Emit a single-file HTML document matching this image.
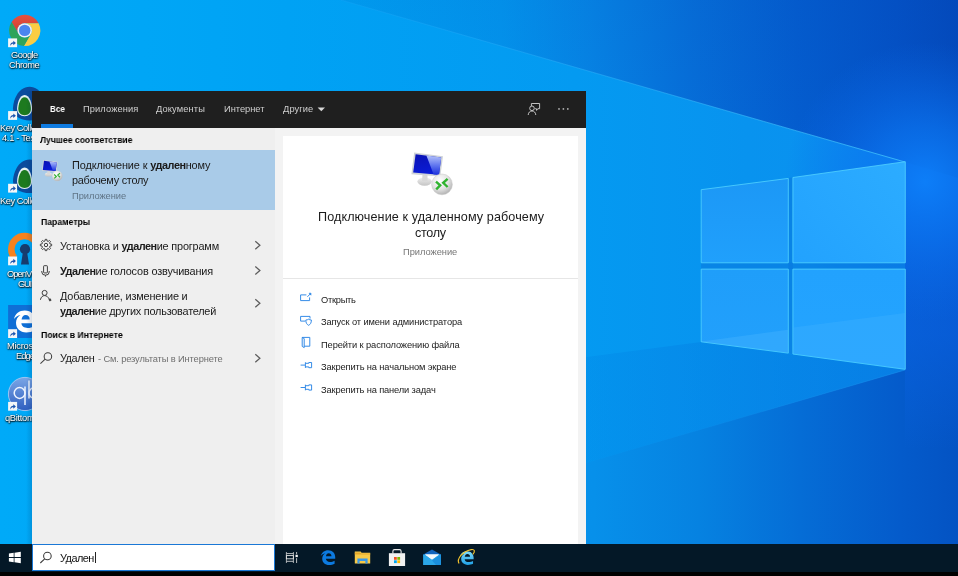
<!DOCTYPE html>
<html lang="ru">
<head>
<meta charset="utf-8">
<title>Поиск</title>
<style>
html,body{margin:0;padding:0;}
body{width:958px;height:576px;overflow:hidden;position:relative;background:#0a84e0;font-family:"Liberation Sans",sans-serif;}
.abs{position:absolute;}
.t{position:absolute;white-space:nowrap;margin:0;padding:0;will-change:transform;}
.t{--ls:0px;}
.t b{font-weight:700;letter-spacing:calc(var(--ls) - 0.33px);}
#wall{position:absolute;left:0;top:0;width:958px;height:576px;display:block;}
#desk{position:absolute;left:0;top:0;width:958px;height:576px;}
#panel{position:absolute;left:0;top:0;width:958px;height:576px;}
#hdr{position:absolute;left:32px;top:91px;width:554px;height:37px;background:#1f1f1f;}
#uline{position:absolute;left:41px;top:124px;width:32px;height:3.5px;background:#0f7be0;}
#lpane{position:absolute;left:32px;top:127.6px;width:242.5px;height:416px;background:#efefef;}
#rpane{position:absolute;left:274.5px;top:127.6px;width:311.5px;height:416px;background:#f3f3f3;}
#card{position:absolute;left:283.4px;top:136px;width:294.4px;height:408px;background:#ffffff;}
#divl{position:absolute;left:283.4px;top:277.5px;width:294.4px;height:1px;background:#e6e6e6;}
#sel{position:absolute;left:32px;top:150.3px;width:242.5px;height:59.3px;background:#a9cbe8;}
#task{position:absolute;left:0;top:543.6px;width:958px;height:28.4px;background:#041827;}
#blk{position:absolute;left:0;top:572px;width:958px;height:4px;background:#000;}
#sbox{position:absolute;left:32px;top:543.5px;width:242.5px;height:27.7px;background:#fff;box-sizing:border-box;border:1.3px solid #1a78d6;border-top-width:1.6px;}
#caret{position:absolute;left:94.6px;top:552.3px;width:0.9px;height:11.2px;background:#222;}
svg{position:absolute;overflow:visible;}
</style>
</head>
<body>
<svg id="wall" viewBox="0 0 958 576" width="958" height="576">
<!--WALL--><defs>
<linearGradient id="gfloor" x1="0" y1="0" x2="958" y2="0" gradientUnits="userSpaceOnUse">
<stop offset="0" stop-color="#00a8f6"/><stop offset="0.45" stop-color="#049af0"/><stop offset="0.62" stop-color="#0790ea"/><stop offset="0.73" stop-color="#0682e1"/><stop offset="0.835" stop-color="#056dd6"/><stop offset="0.94" stop-color="#045bcb"/><stop offset="1" stop-color="#0453c3"/>
</linearGradient>
<linearGradient id="gbeam" x1="0" y1="0" x2="958" y2="0" gradientUnits="userSpaceOnUse">
<stop offset="0" stop-color="#00aaf8"/><stop offset="0.3" stop-color="#00a2f4"/><stop offset="0.6" stop-color="#049af1"/><stop offset="0.78" stop-color="#0893ef"/><stop offset="0.945" stop-color="#0c90f0"/>
</linearGradient>
<linearGradient id="gtop" x1="341" y1="0" x2="958" y2="0" gradientUnits="userSpaceOnUse">
<stop offset="0" stop-color="#009ff2"/><stop offset="0.26" stop-color="#0394ed"/><stop offset="0.40" stop-color="#0684e5"/><stop offset="0.58" stop-color="#066dd8"/><stop offset="0.74" stop-color="#045dcf"/><stop offset="0.9" stop-color="#0452c6"/><stop offset="1" stop-color="#044bbd"/>
</linearGradient>
<linearGradient id="gtopv" x1="0" y1="0" x2="0" y2="170" gradientUnits="userSpaceOnUse">
<stop offset="0" stop-color="#002a90" stop-opacity="0.05"/><stop offset="1" stop-color="#002a90" stop-opacity="0"/>
</linearGradient>
<radialGradient id="gglow" cx="925" cy="182" r="140" gradientUnits="userSpaceOnUse">
<stop offset="0" stop-color="#0d7ef8" stop-opacity="1"/><stop offset="0.4" stop-color="#0b74f0" stop-opacity="0.7"/><stop offset="1" stop-color="#0a68e8" stop-opacity="0"/>
</radialGradient>
<linearGradient id="gline" x1="341" y1="0" x2="905" y2="0" gradientUnits="userSpaceOnUse">
<stop offset="0" stop-color="#30b0ff" stop-opacity="0.15"/><stop offset="1" stop-color="#46ccff" stop-opacity="0.75"/>
</linearGradient>
<linearGradient id="gline2" x1="586" y1="0" x2="905" y2="0" gradientUnits="userSpaceOnUse">
<stop offset="0" stop-color="#0a8ae6" stop-opacity="0"/><stop offset="1" stop-color="#1a90ee" stop-opacity="0.5"/>
</linearGradient>
<linearGradient id="gmid" x1="560" y1="0" x2="905" y2="0" gradientUnits="userSpaceOnUse">
<stop offset="0" stop-color="#0074dc" stop-opacity="0.14"/><stop offset="1" stop-color="#0066d6" stop-opacity="0.42"/>
</linearGradient>
<linearGradient id="gp1" x1="0" y1="180" x2="0" y2="263" gradientUnits="userSpaceOnUse"><stop offset="0" stop-color="#1c98f6"/><stop offset="1" stop-color="#20a0fc"/></linearGradient>
<linearGradient id="gp2" x1="793" y1="263" x2="905" y2="165" gradientUnits="userSpaceOnUse"><stop offset="0" stop-color="#22a2fe"/><stop offset="1" stop-color="#2cacff"/></linearGradient>
<linearGradient id="gp3" x1="0" y1="269" x2="0" y2="353" gradientUnits="userSpaceOnUse"><stop offset="0" stop-color="#1f9efa"/><stop offset="1" stop-color="#22a0fc"/></linearGradient>
<linearGradient id="gp4" x1="0" y1="269" x2="0" y2="369" gradientUnits="userSpaceOnUse"><stop offset="0" stop-color="#22a2fe"/><stop offset="1" stop-color="#24a4ff"/></linearGradient>
<linearGradient id="gright" x1="0" y1="162" x2="0" y2="450" gradientUnits="userSpaceOnUse"><stop offset="0" stop-color="#0a62e2" stop-opacity="0.65"/><stop offset="0.6" stop-color="#0a62e2" stop-opacity="0.6"/><stop offset="1" stop-color="#0a62e2" stop-opacity="0"/></linearGradient>
</defs>
<rect x="0" y="0" width="958" height="576" fill="url(#gfloor)"/>
<polygon points="0,0 341,0 905,162 905,370 198,576 0,576" fill="url(#gbeam)"/>
<polygon points="701,342 905,370 560,470.6 560,360.4" fill="url(#gmid)"/>
<polygon points="341,0 958,0 958,178 905,162" fill="url(#gtop)"/>
<polygon points="341,0 958,0 958,178 905,162" fill="url(#gtopv)"/>
<polygon points="905,162 958,178 958,450 905,450" fill="url(#gright)"/>
<circle cx="925" cy="182" r="140" fill="url(#gglow)"/>
<line x1="341" y1="0" x2="905" y2="162" stroke="url(#gline)" stroke-width="1"/>
<line x1="586" y1="463" x2="905" y2="370" stroke="url(#gline2)" stroke-width="1"/>
<polygon points="788.3,178 792.9,177.4 792.9,354.2 788.3,353.3" fill="#0a78de" opacity="0.55"/>
<polygon points="701.2,262.8 905.3,262.8 905.3,269.1 701.2,269.1" fill="#0a78de" opacity="0.55"/>
<g stroke="#55d6ff" stroke-width="0.9" stroke-opacity="0.85">
<polygon points="701.2,189.7 788.3,178.4 788.3,262.8 701.2,262.8" fill="url(#gp1)"/>
<polygon points="792.9,177.5 905.3,161.7 905.3,262.8 792.9,262.8" fill="url(#gp2)"/>
<polygon points="701.2,269.1 788.3,269.1 788.3,353.1 701.2,341.8" fill="url(#gp3)"/>
<polygon points="792.9,269.1 905.3,269.1 905.3,369.3 792.9,354" fill="url(#gp4)"/>
</g>
<polygon points="701.6,341.4 788,329.8 788,352.7" fill="#43b2ff" opacity="0.45"/>
<polygon points="793.2,327.4 905,312.9 905,368.9 793.2,353.6" fill="#43b2ff" opacity="0.35"/>
<!--/WALL-->
</svg>
<div id="desk">
<!--DESKICONS--><svg width="958" height="576" viewBox="0 0 958 576" style="left:0;top:0">
<defs><linearGradient id="crR" x1="0" y1="0" x2="0" y2="1"><stop offset="0" stop-color="#e5513f"/><stop offset="1" stop-color="#cf3e2e"/></linearGradient><linearGradient id="qbg" x1="0" y1="0" x2="0" y2="1"><stop offset="0" stop-color="#7ba6e6"/><stop offset="1" stop-color="#2f5fc0"/></linearGradient><g id="sc"><rect x="0" y="0" width="9" height="8.8" fill="#f4f6f8"/><path d="M2.2,7.6 C2.0,5.2 3.2,3.9 5.2,3.9 L5.2,2.3 L7.8,4.6 L5.2,6.9 L5.2,5.4 C3.9,5.4 3.0,6.0 2.2,7.6 Z" fill="#1c55b0"/></g></defs>
<path d="M11.61,21.92 A15.6,15.6 0 0 1 38.59,23.30 L24.70,23.30 A7.1,7.1 0 0 0 18.55,33.95 Z" fill="url(#crR)"/>
<path d="M38.59,23.30 A15.6,15.6 0 0 1 23.90,45.98 L30.85,33.95 A7.1,7.1 0 0 0 24.70,23.30 Z" fill="#fbcd42"/>
<path d="M23.90,45.98 A15.6,15.6 0 0 1 11.61,21.92 L18.55,33.95 A7.1,7.1 0 0 0 30.85,33.95 Z" fill="#2ea45a"/>
<circle cx="24.7" cy="30.4" r="7.199999999999999" fill="#f3f3f3"/><circle cx="24.7" cy="30.4" r="5.7" fill="#4a86ee"/>
<path d="M29.6,86.8 C41.55,86.8 46.2,101.58 46.2,108.30 C46.2,116.03 39.23,120.39999999999999 29.6,120.39999999999999 C19.97,120.39999999999999 13.0,116.03 13.0,108.30 C13.0,101.58 17.65,86.8 29.6,86.8 Z" fill="#0b4b9d"/>
<path d="M24.6,94.89999999999999 C30.00,94.89999999999999 32.1,104.32 32.1,108.60 C32.1,113.52 28.95,116.3 24.6,116.3 C20.25,116.3 17.1,113.52 17.1,108.60 C17.1,104.32 19.20,94.89999999999999 24.6,94.89999999999999 Z" fill="#e6f1f3"/>
<path d="M24.6,97.3 C29.14,97.3 30.900000000000002,105.22 30.900000000000002,108.82 C30.900000000000002,112.96 28.25,115.3 24.6,115.3 C20.95,115.3 18.3,112.96 18.3,108.82 C18.3,105.22 20.06,97.3 24.6,97.3 Z" fill="#1d7a1f"/>
<path d="M29.6,159.39999999999998 C41.55,159.39999999999998 46.2,174.18 46.2,180.90 C46.2,188.63 39.23,193.0 29.6,193.0 C19.97,193.0 13.0,188.63 13.0,180.90 C13.0,174.18 17.65,159.39999999999998 29.6,159.39999999999998 Z" fill="#0b4b9d"/>
<path d="M24.6,167.5 C30.00,167.5 32.1,176.92 32.1,181.20 C32.1,186.12 28.95,188.89999999999998 24.6,188.89999999999998 C20.25,188.89999999999998 17.1,186.12 17.1,181.20 C17.1,176.92 19.20,167.5 24.6,167.5 Z" fill="#e6f1f3"/>
<path d="M24.6,169.89999999999998 C29.14,169.89999999999998 30.900000000000002,177.82 30.900000000000002,181.42 C30.900000000000002,185.56 28.25,187.89999999999998 24.6,187.89999999999998 C20.95,187.89999999999998 18.3,185.56 18.3,181.42 C18.3,177.82 20.06,169.89999999999998 24.6,169.89999999999998 Z" fill="#1d7a1f"/>
<path d="M 14.4,257.7 A 13.2,13.2 0 1 1 34.6,257.7" fill="none" stroke="#f5821f" stroke-width="6.5"/>
<circle cx="25" cy="249.2" r="5.1" fill="#173c6e"/><path d="M22.9,252 L27.1,252 L29,264.6 L21,264.6 Z" fill="#173c6e"/>
<rect x="8.1" y="305" width="33" height="33" fill="#0f6fd6"/>
<path transform="translate(13.6,310.6) scale(0.925)" d="M0.4,9.2 C1.6,3.6 6.2,0 12,0 C19.2,0 23.4,5 23.4,11.4 L23.4,13.8 L8.4,13.8 C8.7,17 11.4,18.8 15,18.8 C17.8,18.8 20.2,18 22.4,16.8 L22.4,21.6 C20,22.9 17.2,23.6 13.8,23.6 C6.8,23.6 2.6,19.4 2.6,13.2 C2.6,9.6 4.4,6.6 7.4,4.8 C4.4,5.4 1.8,7 0.4,9.2 Z M8.6,9.6 L17.4,9.6 C17.4,6.6 15.6,4.8 13,4.8 C10.6,4.8 9,6.8 8.6,9.6 Z" fill="#ffffff"/>
<circle cx="25" cy="394" r="16.6" fill="url(#qbg)" stroke="#a9c8f2" stroke-width="0.9"/>
<g fill="none" stroke="#eef4ff" stroke-width="1.5"><circle cx="19.6" cy="393" r="5.4"/><path d="M25,386.6 L25,405"/><path d="M29,380.5 L29,398.6"/><circle cx="34.4" cy="393" r="5.4"/></g>
<use href="#sc" x="8.1" y="38.4"/>
<use href="#sc" x="8.1" y="111.1"/>
<use href="#sc" x="8.1" y="183.8"/>
<use href="#sc" x="8.1" y="256.5"/>
<use href="#sc" x="8.1" y="329.2"/>
<use href="#sc" x="8.1" y="401.9"/>
</svg><!--/DESKICONS-->
<div id="d1a" class="t" style="left:11.15px;top:48.77px;font-size:9.3px;line-height:13.02px;font-weight:400;color:#fff;--ls:-0.547px;letter-spacing:var(--ls);text-shadow:0 1px 1.6px rgba(0,0,0,.9),0 0 1.5px rgba(0,0,0,.65),1px 1px 1px rgba(0,0,0,.5);">Google</div>
<div id="d1b" class="t" style="left:9.40px;top:59.17px;font-size:9.3px;line-height:13.02px;font-weight:400;color:#fff;--ls:-0.480px;letter-spacing:var(--ls);text-shadow:0 1px 1.6px rgba(0,0,0,.9),0 0 1.5px rgba(0,0,0,.65),1px 1px 1px rgba(0,0,0,.5);">Chrome</div>
<div id="d2a" class="t" style="left:0.00px;top:122.17px;font-size:9.3px;line-height:13.02px;font-weight:400;color:#fff;--ls:-0.484px;letter-spacing:var(--ls);text-shadow:0 1px 1.6px rgba(0,0,0,.9),0 0 1.5px rgba(0,0,0,.65),1px 1px 1px rgba(0,0,0,.5);">Key Collector</div>
<div id="d2b" class="t" style="left:1.70px;top:132.17px;font-size:9.3px;line-height:13.02px;font-weight:400;color:#fff;--ls:-0.300px;letter-spacing:var(--ls);text-shadow:0 1px 1.6px rgba(0,0,0,.9),0 0 1.5px rgba(0,0,0,.65),1px 1px 1px rgba(0,0,0,.5);">4.1 - Test...</div>
<div id="d3a" class="t" style="left:0.00px;top:194.97px;font-size:9.3px;line-height:13.02px;font-weight:400;color:#fff;--ls:-0.484px;letter-spacing:var(--ls);text-shadow:0 1px 1.6px rgba(0,0,0,.9),0 0 1.5px rgba(0,0,0,.65),1px 1px 1px rgba(0,0,0,.5);">Key Collector</div>
<div id="d4a" class="t" style="left:6.75px;top:267.57px;font-size:9.3px;line-height:13.02px;font-weight:400;color:#fff;--ls:-0.908px;letter-spacing:var(--ls);text-shadow:0 1px 1.6px rgba(0,0,0,.9),0 0 1.5px rgba(0,0,0,.65),1px 1px 1px rgba(0,0,0,.5);">OpenVPN</div>
<div id="d4b" class="t" style="left:18.00px;top:277.57px;font-size:9.3px;line-height:13.02px;font-weight:400;color:#fff;--ls:-1.177px;letter-spacing:var(--ls);text-shadow:0 1px 1.6px rgba(0,0,0,.9),0 0 1.5px rgba(0,0,0,.65),1px 1px 1px rgba(0,0,0,.5);">GUI</div>
<div id="d5a" class="t" style="left:6.75px;top:339.97px;font-size:9.3px;line-height:13.02px;font-weight:400;color:#fff;--ls:-0.247px;letter-spacing:var(--ls);text-shadow:0 1px 1.6px rgba(0,0,0,.9),0 0 1.5px rgba(0,0,0,.65),1px 1px 1px rgba(0,0,0,.5);">Microsoft</div>
<div id="d5b" class="t" style="left:15.50px;top:349.97px;font-size:9.3px;line-height:13.02px;font-weight:400;color:#fff;--ls:-0.930px;letter-spacing:var(--ls);text-shadow:0 1px 1.6px rgba(0,0,0,.9),0 0 1.5px rgba(0,0,0,.65),1px 1px 1px rgba(0,0,0,.5);">Edge</div>
<div id="d6a" class="t" style="left:4.75px;top:412.17px;font-size:9.3px;line-height:13.02px;font-weight:400;color:#fff;--ls:-0.308px;letter-spacing:var(--ls);text-shadow:0 1px 1.6px rgba(0,0,0,.9),0 0 1.5px rgba(0,0,0,.65),1px 1px 1px rgba(0,0,0,.5);">qBittorrent</div>
</div>
<div id="panel">
<div id="pshadow" style="position:absolute;left:26px;top:91px;width:6px;height:453px;background:linear-gradient(to right,rgba(0,40,90,0),rgba(0,40,90,0.16));"></div><div id="hdr"></div><div id="uline"></div>
<div id="lpane"></div><div id="rpane"></div><div id="card"></div><div id="divl"></div><div id="sel"></div>
<!--PANELICONS--><svg width="958" height="576" viewBox="0 0 958 576" style="left:0;top:0">
<defs>
<linearGradient id="scrA" x1="0" y1="0" x2="0.3" y2="1"><stop offset="0" stop-color="#0a12b4"/><stop offset="1" stop-color="#0a1cd6"/></linearGradient>
<linearGradient id="scrB" x1="0" y1="0" x2="0" y2="1"><stop offset="0" stop-color="#b4c2fa"/><stop offset="0.55" stop-color="#5a70ee"/><stop offset="1" stop-color="#1c30dc"/></linearGradient>
<radialGradient id="ballg" cx="0.4" cy="0.32" r="0.75"><stop offset="0" stop-color="#ffffff"/><stop offset="0.55" stop-color="#e2e2e2"/><stop offset="1" stop-color="#a9a9a9"/></radialGradient>
<linearGradient id="stg" x1="0" y1="0" x2="0" y2="1"><stop offset="0" stop-color="#eeeeee"/><stop offset="1" stop-color="#c4c4c4"/></linearGradient>
<g id="rdp">
<ellipse cx="13.6" cy="29.6" rx="7.2" ry="4.2" fill="url(#stg)"/>
<path d="M11.5,22.5 L16.5,23 L16.5,29 L11,29 Z" fill="#d8d8d8"/>
<polygon points="3.2,0.6 32,4.2 29.3,24.6 0.4,22.2" fill="#cfd3d8"/>
<polygon points="4.6,2.2 30.2,5.4 28,22.8 2.2,20.6" fill="url(#scrA)"/>
<polygon points="15.4,3.5 30.2,5.4 28,22.8 22.6,22.4" fill="url(#scrB)"/>
<circle cx="31" cy="32.4" r="10.4" fill="url(#ballg)" stroke="#c9c9c9" stroke-width="0.5"/>
<path d="M25,29.6 L29.2,33.4 L25.2,37.4 M36.6,26.8 L32.2,30.8 L36.6,35" fill="none" stroke="#2fb32f" stroke-width="2.4" stroke-linejoin="miter"/>
</g>
<path id="chev" d="M-2.4,-4 L2.2,0 L-2.4,4" fill="none" stroke="#5c5c5c" stroke-width="1.25"/>
<g id="pin" fill="none" stroke="#2b86e6" stroke-width="0.95"><path d="M0.2,3 L4.6,3"/><path d="M5,0.2 L5,5.8"/><path d="M5,1.2 L8.4,1.2 L8.4,0.4 L11.2,0.4 L11.2,5.6 L8.4,5.6 L8.4,4.8 L5,4.8"/></g>
</defs>
<use href="#rdp" transform="translate(411,152)"/>
<use href="#rdp" transform="translate(41.7,159.7) scale(0.5)"/>
<polygon points="45.02,240.92 45.24,239.35 46.76,239.35 46.98,240.92 48.19,241.42 49.46,240.47 50.53,241.54 49.58,242.81 50.08,244.02 51.65,244.24 51.65,245.76 50.08,245.98 49.58,247.19 50.53,248.46 49.46,249.53 48.19,248.58 46.98,249.08 46.76,250.65 45.24,250.65 45.02,249.08 43.81,248.58 42.54,249.53 41.47,248.46 42.42,247.19 41.92,245.98 40.35,245.76 40.35,244.24 41.92,244.02 42.42,242.81 41.47,241.54 42.54,240.47 43.81,241.42" fill="none" stroke="#3f3f3f" stroke-width="1" stroke-linejoin="round"/>
<circle cx="46.0" cy="245.0" r="1.7" fill="none" stroke="#3f3f3f" stroke-width="1"/>
<g fill="none" stroke="#3f3f3f" stroke-width="1"><rect x="43.6" y="265.7" width="3.8" height="7.2" rx="0.6"/><path d="M41.8,271 L41.8,272 A3.7,3.2 0 0 0 49.2,272 L49.2,271"/><path d="M45.5,275.2 L45.5,276.6"/></g>
<g fill="none" stroke="#3f3f3f" stroke-width="1"><circle cx="44.6" cy="292.9" r="2.5"/><path d="M40.4,299.8 C41,296.8 42.8,295.6 44.6,295.6 C46.6,295.6 48,296.8 49.6,299.6"/></g><path d="M48.4,299.4 L50.2,298.2 L51.6,300.2 L49.8,301.4 Z" fill="#3f3f3f"/>
<g fill="none" stroke="#3f3f3f" stroke-width="1.05"><circle cx="47.9" cy="356.4" r="3.75"/><path d="M45.2,359.2 L40.4,363.6"/></g>
<use href="#chev" x="257.7" y="245.2"/>
<use href="#chev" x="257.7" y="270.5"/>
<use href="#chev" x="257.7" y="303.3"/>
<use href="#chev" x="257.7" y="358.3"/>
<path d="M317.6,107.6 L325,107.6 L321.3,111.3 Z" fill="#d6d6d6"/>
<g fill="none" stroke="#c9c9c9" stroke-width="0.95"><path d="M531.4,106 L531.4,103.5 L539.6,103.5 L539.6,108.7 L537.8,108.7 L536.6,110.4 L536.4,108.7 L535.2,108.7"/><circle cx="532" cy="108.3" r="2.3"/><path d="M528.2,115 C528.4,112.4 530,111 532,111 C534,111 535.6,112.4 535.8,115"/></g>
<rect x="558.25" y="108.2" width="1.5" height="1.5" fill="#c4c4c4"/>
<rect x="562.65" y="108.2" width="1.5" height="1.5" fill="#c4c4c4"/>
<rect x="567.05" y="108.2" width="1.5" height="1.5" fill="#c4c4c4"/>
<g fill="none" stroke="#2b86e6" stroke-width="0.95">
<path d="M306.4,294.9 L300.6,294.9 L300.6,300.6 L309.6,300.6 L309.6,297.4"/><path d="M307.4,296.8 L310.4,293.8"/>
<path d="M305.2,321.1 L300.6,321.1 L300.6,316.4 L310,316.4 L310,318.6"/><path d="M305.8,320 C307,320 307.8,319.6 308.6,319.2 C309.4,319.6 310.2,320 311.4,320 C311.4,322.8 310.4,324.4 308.6,325.3 C306.8,324.4 305.8,322.8 305.8,320 Z"/>
<path d="M302.2,337.4 L309.8,337.4 L309.8,346.2 L304.2,346.2"/><path d="M302.2,337.4 L304.2,338.6 L304.2,347.6 L302.2,346.4 Z"/>
</g>
<path d="M309,293.2 L311,293.2 L311,295.2 Z" fill="#2b86e6" stroke="#2b86e6" stroke-width="0.6"/>
<use href="#pin" x="300.4" y="362.1"/><use href="#pin" x="300.4" y="384.5"/>
</svg><!--/PANELICONS-->
<div id="tab1" class="t" style="left:49.70px;top:103.27px;font-size:9.3px;line-height:13.02px;font-weight:700;color:#ffffff;transform:scaleX(0.8674);transform-origin:0 0;">Все</div>
<div id="tab2" class="t" style="left:82.50px;top:103.27px;font-size:9.3px;line-height:13.02px;font-weight:400;color:#cfcfcf;--ls:0.109px;letter-spacing:var(--ls);">Приложения</div>
<div id="tab3" class="t" style="left:155.80px;top:103.27px;font-size:9.3px;line-height:13.02px;font-weight:400;color:#cfcfcf;--ls:0.118px;letter-spacing:var(--ls);">Документы</div>
<div id="tab4" class="t" style="left:223.60px;top:103.27px;font-size:9.3px;line-height:13.02px;font-weight:400;color:#cfcfcf;--ls:-0.022px;letter-spacing:var(--ls);">Интернет</div>
<div id="tab5" class="t" style="left:282.80px;top:103.27px;font-size:9.3px;line-height:13.02px;font-weight:400;color:#cfcfcf;--ls:0.106px;letter-spacing:var(--ls);">Другие</div>
<div id="h1" class="t" style="left:40.30px;top:134.27px;font-size:9.3px;line-height:13.02px;font-weight:700;color:#000;transform:scaleX(0.9249);transform-origin:0 0;">Лучшее соответствие</div>
<div id="b1" class="t" style="left:71.70px;top:158.24px;font-size:10.9px;line-height:15.26px;font-weight:400;color:#1a1a1a;--ls:-0.121px;letter-spacing:var(--ls);">Подключение к <b>удален</b>ному</div>
<div id="b2" class="t" style="left:71.70px;top:172.74px;font-size:10.9px;line-height:15.26px;font-weight:400;color:#1a1a1a;--ls:-0.259px;letter-spacing:var(--ls);">рабочему столу</div>
<div id="b3" class="t" style="left:71.70px;top:190.47px;font-size:9.3px;line-height:13.02px;font-weight:400;color:#5f7486;--ls:-0.043px;letter-spacing:var(--ls);">Приложение</div>
<div id="h2" class="t" style="left:40.80px;top:216.27px;font-size:9.3px;line-height:13.02px;font-weight:700;color:#000;transform:scaleX(0.9316);transform-origin:0 0;">Параметры</div>
<div id="r1" class="t" style="left:60.00px;top:238.74px;font-size:10.9px;line-height:15.26px;font-weight:400;color:#1b1b1b;--ls:-0.175px;letter-spacing:var(--ls);">Установка и <b>удален</b>ие программ</div>
<div id="r2" class="t" style="left:60.00px;top:264.04px;font-size:10.9px;line-height:15.26px;font-weight:400;color:#1b1b1b;--ls:-0.164px;letter-spacing:var(--ls);"><b>Удален</b>ие голосов озвучивания</div>
<div id="r3" class="t" style="left:60.00px;top:289.24px;font-size:10.9px;line-height:15.26px;font-weight:400;color:#1b1b1b;--ls:-0.183px;letter-spacing:var(--ls);">Добавление, изменение и</div>
<div id="r4" class="t" style="left:60.00px;top:303.84px;font-size:10.9px;line-height:15.26px;font-weight:400;color:#1b1b1b;--ls:-0.235px;letter-spacing:var(--ls);"><b>удален</b>ие других пользователей</div>
<div id="h3" class="t" style="left:40.80px;top:328.97px;font-size:9.3px;line-height:13.02px;font-weight:700;color:#000;transform:scaleX(0.9404);transform-origin:0 0;">Поиск в Интернете</div>
<div id="w1" class="t" style="left:60.00px;top:351.04px;font-size:10.9px;line-height:15.26px;font-weight:400;color:#1b1b1b;--ls:-0.451px;letter-spacing:var(--ls);">Удален</div>
<div id="w2" class="t" style="left:97.50px;top:353.27px;font-size:9.3px;line-height:13.02px;font-weight:400;color:#6e6e6e;--ls:-0.126px;letter-spacing:var(--ls);">- См. результаты в Интернете</div>
<div id="c1" class="t" style="left:317.50px;top:208.61px;font-size:12.6px;line-height:17.64px;font-weight:400;color:#1b1b1b;--ls:0.095px;letter-spacing:var(--ls);">Подключение к удаленному рабочему</div>
<div id="c2" class="t" style="left:415.00px;top:225.31px;font-size:12.6px;line-height:17.64px;font-weight:400;color:#1b1b1b;--ls:-0.299px;letter-spacing:var(--ls);">столу</div>
<div id="c3" class="t" style="left:403.30px;top:245.97px;font-size:9.3px;line-height:13.02px;font-weight:400;color:#767676;--ls:-0.033px;letter-spacing:var(--ls);">Приложение</div>
<div id="a1" class="t" style="left:320.60px;top:294.07px;font-size:9.3px;line-height:13.02px;font-weight:400;color:#1b1b1b;--ls:-0.259px;letter-spacing:var(--ls);">Открыть</div>
<div id="a2" class="t" style="left:320.60px;top:316.47px;font-size:9.3px;line-height:13.02px;font-weight:400;color:#1b1b1b;--ls:-0.109px;letter-spacing:var(--ls);">Запуск от имени администратора</div>
<div id="a3" class="t" style="left:320.60px;top:338.67px;font-size:9.3px;line-height:13.02px;font-weight:400;color:#1b1b1b;--ls:-0.105px;letter-spacing:var(--ls);">Перейти к расположению файла</div>
<div id="a4" class="t" style="left:320.60px;top:361.47px;font-size:9.3px;line-height:13.02px;font-weight:400;color:#1b1b1b;--ls:-0.128px;letter-spacing:var(--ls);">Закрепить на начальном экране</div>
<div id="a5" class="t" style="left:320.60px;top:383.97px;font-size:9.3px;line-height:13.02px;font-weight:400;color:#1b1b1b;--ls:-0.139px;letter-spacing:var(--ls);">Закрепить на панели задач</div>
</div>
<div id="task"></div><div id="blk"></div><div id="sbox"></div><div id="caret"></div>
<!--TASKICONS--><svg width="958" height="576" viewBox="0 0 958 576" style="left:0;top:0">
<defs>
<linearGradient id="ieg" x1="0" y1="0" x2="0" y2="1"><stop offset="0" stop-color="#7fdcfb"/><stop offset="1" stop-color="#1ea0e6"/></linearGradient>
<path id="edgeE" d="M0.4,9.2 C1.6,3.6 6.2,0 12,0 C19.2,0 23.4,5 23.4,11.4 L23.4,13.8 L8.4,13.8 C8.7,17 11.4,18.8 15,18.8 C17.8,18.8 20.2,18 22.4,16.8 L22.4,21.6 C20,22.9 17.2,23.6 13.8,23.6 C6.8,23.6 2.6,19.4 2.6,13.2 C2.6,9.6 4.4,6.6 7.4,4.8 C4.4,5.4 1.8,7 0.4,9.2 Z M8.6,9.6 L17.4,9.6 C17.4,6.6 15.6,4.8 13,4.8 C10.6,4.8 9,6.8 8.6,9.6 Z"/>
</defs>
<!-- start logo -->
<g fill="#ffffff">
<polygon points="8.9,553.5 13.7,552.8 13.7,557.1 8.9,557.1"/>
<polygon points="14.5,552.7 20.8,551.8 20.8,557.1 14.5,557.1"/>
<polygon points="8.9,557.9 13.7,557.9 13.7,562.2 8.9,561.5"/>
<polygon points="14.5,557.9 20.8,557.9 20.8,563.2 14.5,562.3"/>
</g>
<!-- search glass -->
<g fill="none" stroke="#3a3a3a" stroke-width="1.05"><circle cx="47.4" cy="556" r="3.8"/><path d="M44.7,558.9 L40.3,563"/></g>
<!-- task view -->
<g fill="none" stroke="#e2e2e2" stroke-width="0.9">
<path d="M286.4,552 V563 M293.4,552 V563" stroke-opacity="0.8"/>
<path d="M286.4,553.6 H293.4 M286.4,561.3 H293.4" stroke-opacity="0.9"/>
<rect x="286.4" y="555.6" width="7" height="3.2"/>
<path d="M296.6,552 V554.2 M296.6,558.1 V563" stroke-opacity="0.9"/>
</g>
<rect x="295.5" y="554.8" width="2.3" height="2.3" fill="#f6f6f6"/>
<!-- edge -->
<use href="#edgeE" transform="translate(320.6,550.2) scale(0.625)" fill="#0c7ae0"/>
<!-- explorer -->
<path d="M354.8,551.6 L360.6,551.6 L361.6,552.8 L370.2,552.8 L370.2,563.4 L354.8,563.4 Z" fill="#f7c948"/>
<path d="M354.8,552.4 L360.2,552.4 L361.2,553.6 L370.2,553.6 L370.2,554.6 L354.8,554.6 Z" fill="#e3a72c"/>
<path d="M357.4,558.6 L367.6,558.6 L367.6,563.4 L365.4,563.4 L365.4,561 L359.6,561 L359.6,563.4 L357.4,563.4 Z" fill="#3b98e6"/>
<!-- store -->
<path d="M392.9,553.6 L392.9,551.2 Q392.9,549.6 394.5,549.6 L399.5,549.6 Q401.1,549.6 401.1,551.2 L401.1,553.6" fill="none" stroke="#e9e9e9" stroke-width="1.1"/>
<rect x="388.9" y="553.2" width="16.2" height="12.8" fill="#f1f1f1"/>
<rect x="394" y="557" width="2.8" height="2.8" fill="#f25022"/><rect x="397.3" y="557" width="2.8" height="2.8" fill="#7fba00"/>
<rect x="394" y="560.3" width="2.8" height="2.8" fill="#00a4ef"/><rect x="397.3" y="560.3" width="2.8" height="2.8" fill="#ffb900"/>
<!-- mail -->
<polygon points="423.3,554.6 432,549.4 440.8,554.6 440.8,556 423.3,556" fill="#1264bd"/>
<rect x="423.3" y="554.6" width="17.5" height="10.4" fill="#2ba7e9"/>
<polygon points="425,554.6 439,554.6 432,559.4" fill="#f4f8fb"/>
<polygon points="423.3,554.6 432,560.4 440.8,554.6 440.8,565 423.3,565" fill="#2ba7e9"/>
<polygon points="432,560.4 440.8,554.6 440.8,565 436,565" fill="#1b8fdd"/>
<polygon points="425,554.6 439,554.6 432,559.4" fill="#f4f8fb"/>
<!-- IE -->
<use href="#edgeE" transform="translate(459.6,551.2) scale(0.6,0.58)" fill="url(#ieg)"/>
<path d="M459,563.6 C456.4,558.6 462.6,551.4 471.2,549.6 C474.8,549 475.4,551.4 472.8,554.4" fill="none" stroke="#f2c32e" stroke-width="1.15"/>
</svg>
<!--/TASKICONS-->
<div id="s1" class="t" style="left:60.20px;top:550.74px;font-size:10.9px;line-height:15.26px;font-weight:400;color:#111;--ls:-0.518px;letter-spacing:var(--ls);">Удален</div>
</body>
</html>
